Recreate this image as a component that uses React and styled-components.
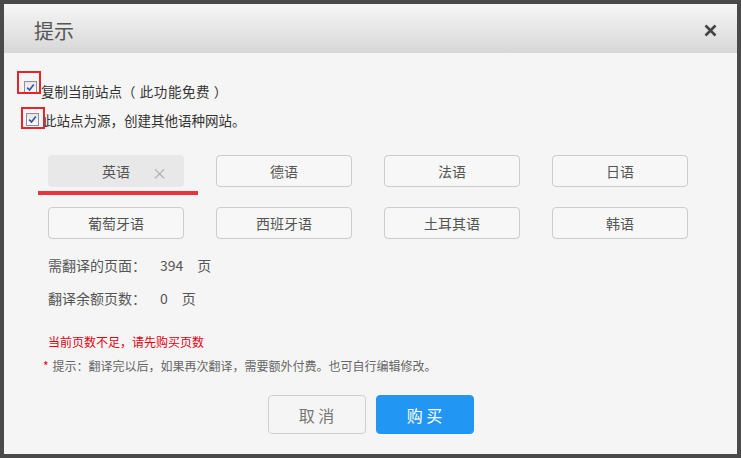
import styled, { createGlobalStyle } from "styled-components";

const GlobalStyle = createGlobalStyle`
  html, body {
    margin: 0;
    padding: 0;
    background: #4a4a4a;
  }
  body {
    font-family: "Noto Sans CJK SC", "Microsoft YaHei", sans-serif;
  }
`;

const languages = [
  { name: "英语", selected: true },
  { name: "德语" },
  { name: "法语" },
  { name: "日语" },
  { name: "葡萄牙语" },
  { name: "西班牙语" },
  { name: "土耳其语" },
  { name: "韩语" },
];

export default function App() {
  return (
    <>
      <GlobalStyle />
      <Page>
        <Dialog>
          <Header>
            <Title>提示</Title>
            <Close>
              <svg width="13" height="13" viewBox="0 0 13 13">
                <path d="M1.5 1.5 L11.5 11.5 M11.5 1.5 L1.5 11.5" stroke="#444" strokeWidth="2.6" />
              </svg>
            </Close>
          </Header>
          <Body>
            <CheckRow indent={20}>
              <CheckBox drop={5}>
                <RedMark left={-8} top={-11} width={24} height={23} />
              </CheckBox>
              <CheckText>
                复制当前站点<Paren>（ 此功能免费 ）</Paren>
              </CheckText>
            </CheckRow>
            <CheckRow indent={22}>
              <CheckBox drop={8}>
                <RedMark left={-6} top={-7} width={24} height={22} />
              </CheckBox>
              <CheckText>此站点为源，创建其他语种网站。</CheckText>
            </CheckRow>

            <LangGrid>
              {languages.map((lang) => (
                <LangButton key={lang.name} selected={lang.selected}>
                  {lang.name}
                  {lang.selected && <Remove>×</Remove>}
                  {lang.selected && <Underline />}
                </LangButton>
              ))}
            </LangGrid>

            <InfoList>
              <InfoRow>
                <span>需翻译的页面：</span>
                <InfoValue>394</InfoValue>
                <span>页</span>
              </InfoRow>
              <InfoRow>
                <span>翻译余额页数：</span>
                <InfoValue>0</InfoValue>
                <span>页</span>
              </InfoRow>
            </InfoList>

            <Warning>当前页数不足，请先购买页数</Warning>
            <Tip>
              <Star>*</Star>提示：翻译完以后，如果再次翻译，需要额外付费。也可自行编辑修改。
            </Tip>

            <Footer>
              <Button>取 消</Button>
              <Button primary>购 买</Button>
            </Footer>
          </Body>
        </Dialog>
      </Page>
    </>
  );
}

function CheckBox({ drop, children }) {
  return (
    <Box drop={drop}>
      <svg width="9" height="9" viewBox="0 0 9 9">
        <path d="M1.2 4.6 L3.5 7 L7.8 1.4" fill="none" stroke="#3b4fa0" strokeWidth="1.6" />
      </svg>
      {children}
    </Box>
  );
}

const Page = styled.div`
  width: 741px;
  height: 458px;
  padding: 4px;
  box-sizing: border-box;
  background: #4a4a4a;
`;

const Dialog = styled.div`
  width: 733px;
  height: 450px;
  background: #f5f5f5;
  display: flex;
  flex-direction: column;
`;

const Header = styled.div`
  height: 49px;
  box-sizing: border-box;
  flex-shrink: 0;
  background: linear-gradient(#f6f6f6, #d7d7d7);
  display: flex;
  align-items: center;
  justify-content: space-between;
  padding: 4px 20px 0 30px;
`;

const Title = styled.div`
  font-size: 20px;
  color: #555;
`;

const Close = styled.div`
  display: flex;
`;

const Body = styled.div`
  padding-top: 23px;
  display: flex;
  flex-direction: column;
`;

const CheckRow = styled.div`
  display: flex;
  align-items: center;
  padding-left: ${(p) => p.indent}px;
  height: 29px;
`;

const Box = styled.div`
  position: relative;
  align-self: flex-start;
  margin-top: ${(p) => p.drop}px;
  width: 13px;
  height: 13px;
  box-sizing: border-box;
  border: 1px solid #8f8f9d;
  background: linear-gradient(#e6e6e6, #fafafa);
  display: flex;
  align-items: center;
  justify-content: center;
  flex-shrink: 0;
`;

const RedMark = styled.div`
  position: absolute;
  left: ${(p) => p.left}px;
  top: ${(p) => p.top}px;
  width: ${(p) => p.width}px;
  height: ${(p) => p.height}px;
  box-sizing: border-box;
  border: 2px solid #e8242b;
`;

const CheckText = styled.div`
  font-size: 13.5px;
  color: #333;
  margin-left: 4px;
`;

const Paren = styled.span`
  letter-spacing: 0.6px;
`;

const LangGrid = styled.div`
  display: grid;
  grid-template-columns: repeat(4, 136px);
  column-gap: 32px;
  row-gap: 20px;
  margin: 21px 0 0 44px;
`;

const LangButton = styled.div`
  position: relative;
  height: 32px;
  box-sizing: border-box;
  border: 1px solid ${(p) => (p.selected ? "#e8e8e8" : "#cccccc")};
  background: ${(p) => (p.selected ? "#e8e8e8" : "#f7f7f7")};
  border-radius: 4px;
  display: flex;
  align-items: center;
  justify-content: center;
  font-size: 14px;
  color: #555;
`;

const Remove = styled.span`
  position: absolute;
  right: 16px;
  top: 6px;
  font-size: 15px;
  color: #aaa;
`;

const Underline = styled.div`
  position: absolute;
  left: -11px;
  top: 35px;
  width: 160px;
  height: 4px;
  background: #e8343a;
`;

const InfoList = styled.div`
  margin: 9px 0 0 44px;
  display: flex;
  flex-direction: column;
`;

const InfoRow = styled.div`
  display: flex;
  align-items: center;
  height: 33px;
  font-size: 14px;
  color: #555;
`;

const InfoValue = styled.span`
  margin: 0 14px 0 14px;
`;

const Warning = styled.div`
  margin: 19px 0 0 44px;
  font-size: 12px;
  line-height: 17px;
  color: #e60012;
`;

const Tip = styled.div`
  margin: 7px 0 0 39px;
  font-size: 12px;
  line-height: 17px;
  color: #666;
`;

const Star = styled.span`
  color: #e60012;
  margin-right: 4px;
`;

const Footer = styled.div`
  display: flex;
  justify-content: center;
  gap: 10px;
  margin-top: 21px;
`;

const Button = styled.div`
  width: 98px;
  height: 39px;
  box-sizing: border-box;
  border-radius: 4px;
  border: 1px solid ${(p) => (p.primary ? "#2196f3" : "#d0d0d0")};
  background: ${(p) => (p.primary ? "#2196f3" : "#f5f5f5")};
  color: ${(p) => (p.primary ? "#fff" : "#777")};
  font-size: 16px;
  display: flex;
  align-items: center;
  justify-content: center;
`;
